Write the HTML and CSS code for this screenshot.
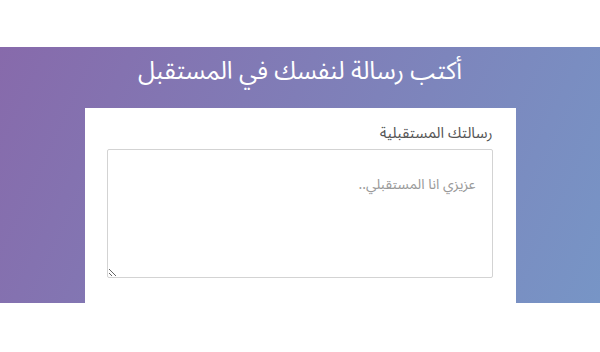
FILE: index.html
```html
<!DOCTYPE html>
<html lang="ar" dir="rtl">
<head>
    <meta charset="UTF-8">
    <meta name="viewport" content="width=device-width, initial-scale=1.0">
    <title>رسالة للمستقبل</title>
    <link rel="stylesheet" href="styles.css">
</head>
<body>
    <div class="top-space"></div>

    <!-- قسم كتابة الرسالة -->
    <section class="hero">
        <h1>أكتب رسالة لنفسك في المستقبل</h1>

        <div class="card">
            <label for="message">رسالتك المستقبلية</label>
            <textarea id="message" placeholder="عزيزي انا المستقبلي.."></textarea>
        </div>
    </section>
</body>
</html>
```

FILE: styles.css
```css
body {
    margin: 0;
    padding: 0;
    background: white;
    font-family: "Noto Sans Arabic", "DejaVu Sans", sans-serif;
    direction: rtl;
}
.top-space {
    height: 47px;
}

/* Hero styling */
.hero {
    background: linear-gradient(115deg, #876aab, #7795c6);
    padding-top: 6px;
}
.hero h1 {
    margin: 0;
    color: white;
    font-size: 24.5px;
    font-weight: normal;
    line-height: 36px;
    text-align: center;
}

/* Card styling */
.card {
    width: 431px;
    box-sizing: border-box;
    margin: 19px auto 0 auto;
    background: white;
    padding: 15px 23px 25px 22px;
}
.card label {
    display: block;
    color: #555;
    font-size: 15px;
    line-height: 20px;
    margin-bottom: 6px;
}
.card textarea {
    display: block;
    width: 100%;
    height: 129px;
    box-sizing: border-box;
    border: 1px solid #d3d3d3;
    border-radius: 2px;
    padding: 20px 16px;
    font-family: inherit;
    font-size: 14px;
    color: #555;
}
.card textarea::placeholder {
    color: #999;
}
```
